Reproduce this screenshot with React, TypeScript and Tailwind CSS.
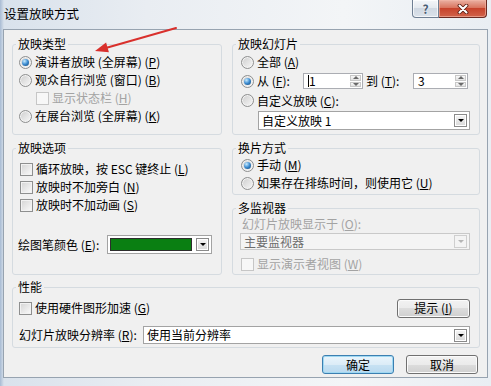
import React from "react";

const font = "font-['Noto_Sans_CJK_SC','Noto_Sans',sans-serif]";

function K({ c }: { c: string }) {
  return <span className="underline underline-offset-[1px]">{c}</span>;
}

function Radio({ checked }: { checked?: boolean }) {
  return (
    <span className="flex h-[13px] w-[13px] shrink-0 items-center justify-center rounded-full border border-[#8e8f8f] bg-[linear-gradient(135deg,#cdcdcd,#f8f8f8)] shadow-[inset_0_0_0_1px_#f3f3f3]">
      {checked && (
        <span className="h-[7px] w-[7px] rounded-full bg-[radial-gradient(circle_at_35%_30%,#c8ecff,#3a8ad0_50%,#10406c)]" />
      )}
    </span>
  );
}

function Check({ disabled }: { disabled?: boolean }) {
  return (
    <span
      className={`h-[13px] w-[13px] shrink-0 border ${
        disabled
          ? "border-[#c6c6c6] bg-[#f7f7f7]"
          : "border-[#8e8f8f] bg-[linear-gradient(135deg,#d4d4d4,#fbfbfb)] shadow-[inset_0_0_0_1px_#f2f2f2]"
      }`}
    />
  );
}

function Row({ children, className = "" }: { children: React.ReactNode; className?: string }) {
  return <div className={`flex h-[18px] items-center gap-[3px] ${className}`}>{children}</div>;
}

function Group({
  title,
  className = "",
  children,
}: {
  title: string;
  className?: string;
  children: React.ReactNode;
}) {
  return (
    <fieldset className={`rounded-[3px] border border-[#d5dbe0] ${className}`}>
      <legend className="ml-[3px] px-[2px] leading-[14px]">{title}</legend>
      {children}
    </fieldset>
  );
}

function DropBtn({ disabled }: { disabled?: boolean }) {
  return (
    <span
      className={`flex h-[13px] w-[13px] shrink-0 items-center justify-center border ${
        disabled
          ? "border-[#cfcfcf] bg-[#f4f4f4]"
          : "border-[#8a8a8a] bg-[linear-gradient(#f6f6f6,#d8d8d8)] shadow-[inset_0_0_0_1px_#ffffff]"
      }`}
    >
      <span
        className={`h-0 w-0 border-x-[3px] border-t-[3px] border-x-transparent ${
          disabled ? "border-t-[#b5b5b5]" : "border-t-black"
        }`}
      />
    </span>
  );
}

function Combo({
  text,
  className = "",
  disabled,
}: {
  text: React.ReactNode;
  className?: string;
  disabled?: boolean;
}) {
  return (
    <div
      className={`flex items-center border pl-[3px] pr-[2px] ${
        disabled ? "border-[#c9c9c9] bg-[#f4f4f4] text-[#6d6d6d]" : "border-[#a3a3a3] bg-white"
      } ${className}`}
    >
      <span className="flex-1 leading-[14px]">{text}</span>
      <DropBtn disabled={disabled} />
    </div>
  );
}

function SpinArrow({ up }: { up?: boolean }) {
  return (
    <span className="flex flex-1 items-center justify-center border border-[#c8c8c8] bg-[linear-gradient(#f8f8f8,#e2e2e2)]">
      <span
        className={`h-0 w-0 border-x-[3px] border-x-transparent ${
          up ? "border-b-[3px] border-b-[#6a6a6a]" : "border-t-[3px] border-t-[#6a6a6a]"
        }`}
      />
    </span>
  );
}

function Spin({ value, className = "", caret }: { value: string; className?: string; caret?: boolean }) {
  return (
    <div className={`flex h-[16px] items-stretch border border-[#abadb3] bg-white ${className}`}>
      <div className="flex flex-1 items-center pl-[4px] leading-none">
        {caret && <span className="h-[12px] w-px bg-black" />}
        {value}
      </div>
      <div className="flex w-[13px] flex-col gap-px p-px">
        <SpinArrow up />
        <SpinArrow />
      </div>
    </div>
  );
}

function Button({
  children,
  isDefault,
  className = "",
}: {
  children: React.ReactNode;
  isDefault?: boolean;
  className?: string;
}) {
  return (
    <button
      className={`flex h-[19px] items-center justify-center rounded-[3px] border leading-none ${
        isDefault
          ? "border-[#3c7fb1] bg-[linear-gradient(#e9f5fc,#dcecf7_50%,#c8e2f3_50%,#b9d9ef)] shadow-[inset_0_0_0_1px_#9fd8f2]"
          : "border-[#707070] bg-[linear-gradient(#f2f2f2,#ebebeb_50%,#dddddd_50%,#cfcfcf)] shadow-[inset_0_0_0_1px_#fbfbfb]"
      } ${className}`}
    >
      {children}
    </button>
  );
}

export default function App() {
  return (
    <div
      className={`relative flex h-[386px] w-[491px] flex-col overflow-hidden bg-[linear-gradient(90deg,#a8bbd3_0px,#d9e2ec_4px,#e9edf2_30%,#f3f5f7_70%,#e9eef3)] text-[12px] text-black ${font}`}
    >
      {/* title bar */}
      <div className="flex h-[29px] shrink-0 items-start">
        <div className="pl-[4px] pt-[7px] text-[12.5px] leading-[14px]">设置放映方式</div>
        <div className="ml-auto mr-[4px] flex h-[18px]">
          <div className="flex w-[27px] items-center justify-center rounded-bl-[4px] border border-t-0 border-[#6f7f93] bg-[linear-gradient(#f4f6f9,#e3e8ee_50%,#d0d8e2_50%,#dbe2ea)] shadow-[inset_0_0_0_1px_#ffffffb0]">
            <span className="text-[12px] font-bold leading-none text-[#4b5d74] [text-shadow:0_0_2px_#fff]">?</span>
          </div>
          <div className="flex w-[48px] items-center justify-center rounded-br-[4px] border border-l-0 border-t-0 border-[#6b2a22] bg-[linear-gradient(#eab1a3,#d9755f_45%,#c7432c_50%,#d1634a)] shadow-[inset_0_0_0_1px_#f3b8a8a0]">
            <svg width="12" height="10" viewBox="0 0 12 10">
              <path d="M2.5 1.5 L9.5 8.5 M9.5 1.5 L2.5 8.5" stroke="#5b1c12" strokeWidth="3.8" strokeLinecap="round" />
              <path d="M2.5 1.5 L9.5 8.5 M9.5 1.5 L2.5 8.5" stroke="#fff" strokeWidth="2.1" strokeLinecap="round" />
            </svg>
          </div>
        </div>
      </div>

      {/* client */}
      <div className="ml-[3px] h-[349px] w-[485px] border border-[#97a3b0] bg-[#f0f0f0]">
        <div className="flex flex-col pl-[8px] pr-[7px] pt-[7px]">
          <div className="flex gap-[10px]">
            <Group title="放映类型" className="h-[98px] w-[210px]">
              <div className="flex flex-col pl-[6px] pt-[2px]">
                <Row>
                  <Radio checked />
                  <span>
                    演讲者放映 (全屏幕) (<K c="P" />)
                  </span>
                </Row>
                <Row>
                  <Radio />
                  <span>
                    观众自行浏览 (窗口) (<K c="B" />)
                  </span>
                </Row>
                <Row className="ml-[17px]">
                  <Check disabled />
                  <span className="text-[#a3a3a3]">
                    显示状态栏 (<K c="H" />)
                  </span>
                </Row>
                <Row>
                  <Radio />
                  <span>
                    在展台浏览 (全屏幕) (<K c="K" />)
                  </span>
                </Row>
              </div>
            </Group>

            <Group title="放映幻灯片" className="h-[98px] w-[248px]">
              <div className="flex flex-col pl-[8px] pt-[2px]">
                <Row>
                  <Radio />
                  <span>
                    全部 (<K c="A" />)
                  </span>
                </Row>
                <div className="flex h-[20px] items-center">
                  <Radio checked />
                  <span className="ml-[3px] w-[46px]">
                    从 (<K c="F" />):
                  </span>
                  <Spin value="1" caret className="w-[60px]" />
                  <span className="w-[50px] pl-[3px]">
                    到 (<K c="T" />):
                  </span>
                  <Spin value="3" className="w-[55px]" />
                </div>
                <Row className="h-[19px]">
                  <Radio />
                  <span>
                    自定义放映 (<K c="C" />):
                  </span>
                </Row>
                <Combo text="自定义放映 1" className="ml-[17px] mr-[9px] mt-[1px] h-[19px]" />
              </div>
            </Group>
          </div>

          <div className="mt-[6px] flex gap-[10px]">
            <Group title="放映选项" className="h-[134px] w-[210px]">
              <div className="flex flex-col pt-[5px]">
                <Row className="pl-[7px]">
                  <Check />
                  <span>
                    循环放映，按 ESC 键终止 (<K c="L" />)
                  </span>
                </Row>
                <Row className="pl-[7px]">
                  <Check />
                  <span>
                    放映时不加旁白 (<K c="N" />)
                  </span>
                </Row>
                <Row className="pl-[7px]">
                  <Check />
                  <span>
                    放映时不加动画 (<K c="S" />)
                  </span>
                </Row>
                <div className="mt-[21px] flex h-[19px] items-center pl-[5px]">
                  <span className="w-[89px]">
                    绘图笔颜色 (<K c="E" />):
                  </span>
                  <div className="flex h-[19px] w-[105px] items-center gap-[4px] border border-[#a3a3a3] bg-white pl-[2px] pr-[2px]">
                    <span className="h-[13px] flex-1 border border-[#2d2d2d] bg-[#0a7f12]" />
                    <DropBtn />
                  </div>
                </div>
              </div>
            </Group>

            <div className="flex w-[248px] flex-col">
              <Group title="换片方式" className="h-[54px]">
                <div className="flex flex-col pl-[8px] pt-[1px]">
                  <Row>
                    <Radio checked />
                    <span>
                      手动 (<K c="M" />)
                    </span>
                  </Row>
                  <Row>
                    <Radio />
                    <span>
                      如果存在排练时间，则使用它 (<K c="U" />)
                    </span>
                  </Row>
                </div>
              </Group>
              <Group title="多监视器" className="mt-[6px] h-[74px]">
                <div className="flex flex-col pl-[7px] pr-[9px]">
                  <div className="flex h-[18px] items-center pl-[2px] text-[#a3a3a3]">
                    幻灯片放映显示于 (<K c="O" />):
                  </div>
                  <Combo text="主要监视器" disabled className="h-[17px]" />
                  <Row className="mt-[5px] pl-[1px]">
                    <Check disabled />
                    <span className="text-[#a3a3a3]">
                      显示演示者视图 (<K c="W" />)
                    </span>
                  </Row>
                </div>
              </Group>
            </div>
          </div>

          <Group title="性能" className="mt-[5px] h-[68px] w-[468px]">
            <div className="flex flex-col pl-[6px] pr-[9px] pt-[4px]">
              <div className="flex h-[20px] items-center gap-[3px]">
                <Check />
                <span>
                  使用硬件图形加速 (<K c="G" />)
                </span>
                <Button className="ml-auto w-[73px]">
                  提示 (<K c="I" />)
                </Button>
              </div>
              <div className="mt-[8px] flex h-[18px] items-center">
                <span className="w-[124px]">
                  幻灯片放映分辨率 (<K c="R" />):
                </span>
                <Combo text="使用当前分辨率" className="h-[18px] flex-1" />
              </div>
            </div>
          </Group>

          <div className="mt-[7px] flex justify-end gap-[12px] pr-[2px]">
            <Button isDefault className="w-[72px]">
              确定
            </Button>
            <Button className="w-[72px]">取消</Button>
          </div>
        </div>
      </div>

      {/* red annotation arrow */}
      <svg
        className="pointer-events-none absolute left-0 top-0"
        width="491"
        height="386"
        viewBox="0 0 491 386"
      >
        <line x1="176" y1="28" x2="104" y2="48.5" stroke="#d9302c" strokeWidth="2" strokeLinecap="round" />
        <polygon points="95,51 106.1,42.6 108.9,52.3" fill="#d9302c" />
      </svg>
    </div>
  );
}
